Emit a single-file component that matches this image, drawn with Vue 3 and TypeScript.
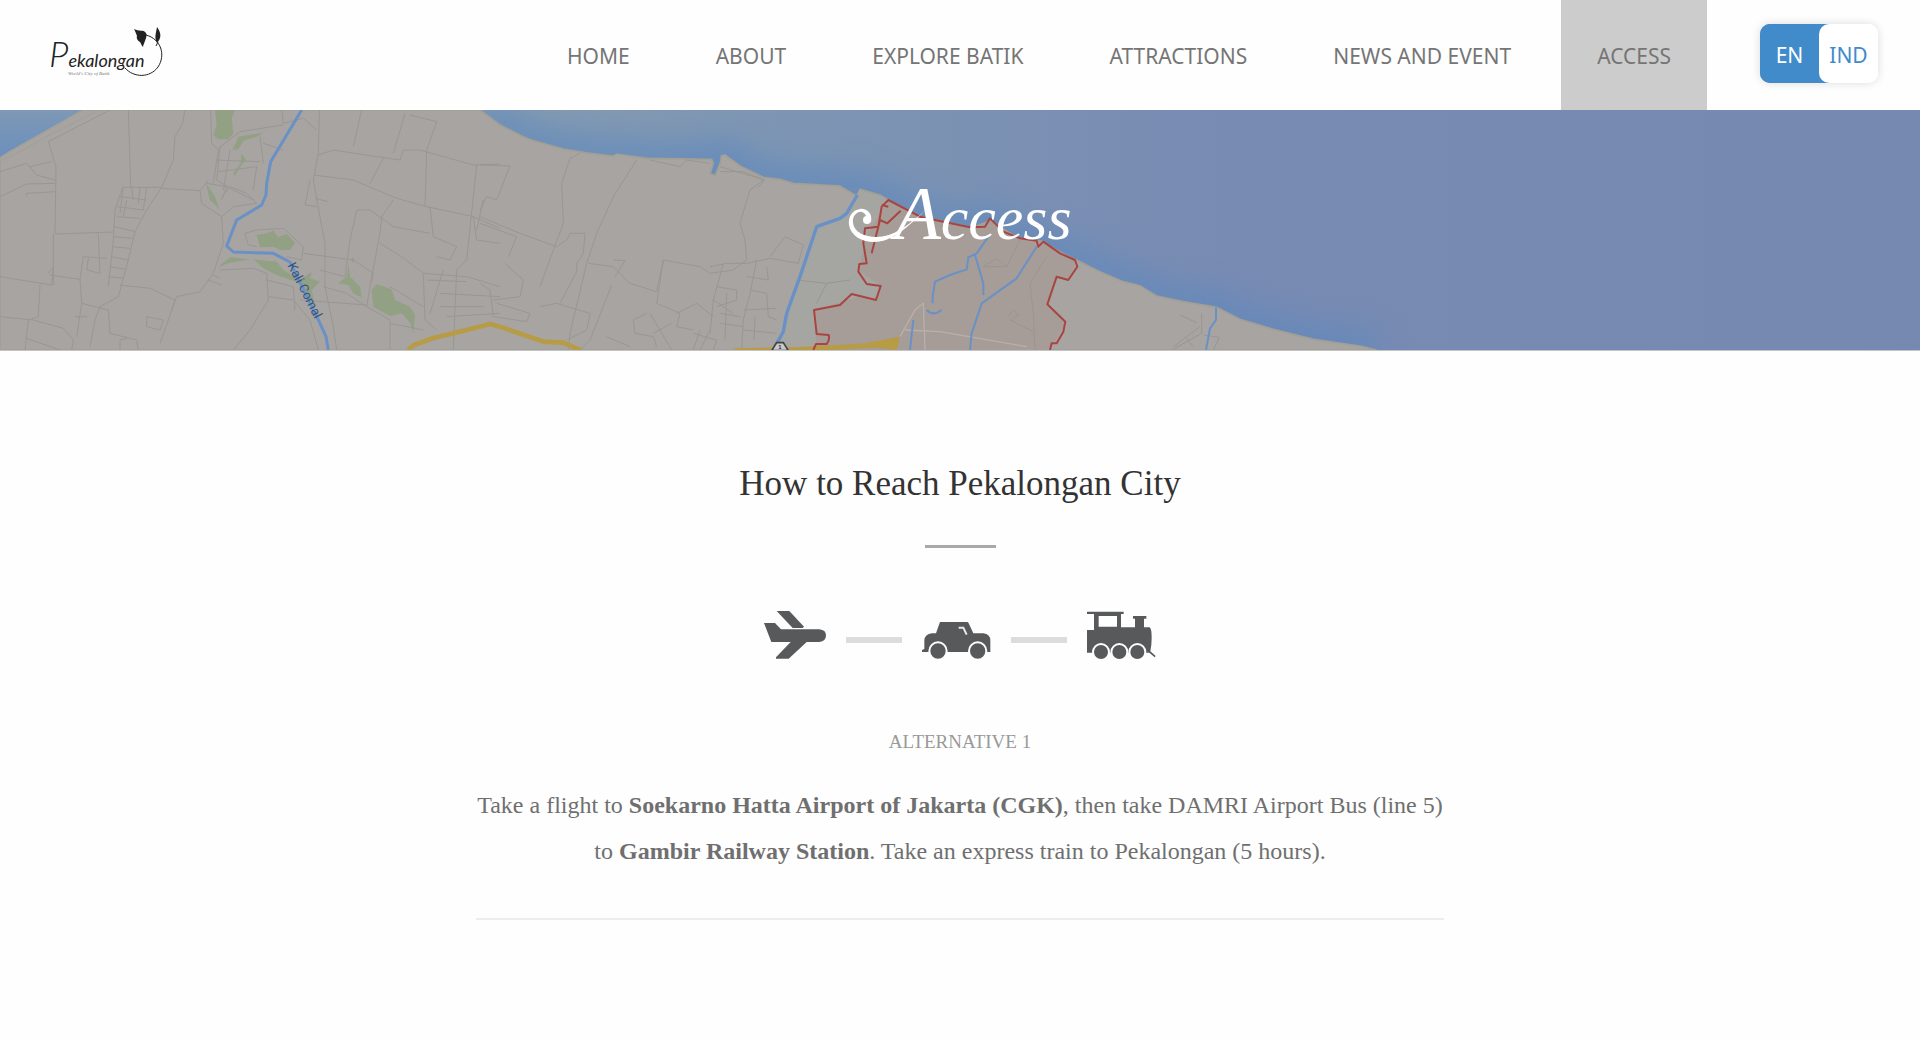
<script setup lang="ts">
import { ref } from 'vue'

interface NavItem {
  label: string
  href: string
}

const navItems: NavItem[] = [
  { label: 'HOME', href: '#home' },
  { label: 'ABOUT', href: '#about' },
  { label: 'EXPLORE BATIK', href: '#explore-batik' },
  { label: 'ATTRACTIONS', href: '#attractions' },
  { label: 'NEWS AND EVENT', href: '#news-and-event' },
  { label: 'ACCESS', href: '#access' },
]

const current = ref('ACCESS')
const language = ref<'EN' | 'IND'>('EN')

const coast =
  'M1440 0 L1500 45 L1570 80 L1600 92 L1690 117 L1770 130 L1840 138 L1850 132 L1940 145 L2135 148 L2140 160 L2130 192 L2146 196 L2162 155 L2164 138 L2175 135 L2220 168 L2290 202 L2340 208 L2380 220 L2520 228 L2570 258 L2580 238 L2640 255 L2665 270 L2760 320 L2830 335 L2910 352 L2950 350 L2970 330 L3010 365 L3060 385 L3130 395 L3180 430 L3230 450 L3300 485 L3370 515 L3420 527 L3470 558 L3550 575 L3650 592 L3720 628 L3820 658 L3940 688 L4080 708 L4130 720'
</script>

<template>
  <div class="page">
    <header class="topbar">
      <a class="logo" href="#home" aria-label="Pekalongan, World's City of Batik">
        <svg viewBox="0 0 130 70" width="130" height="70" aria-hidden="true">
          <text class="logo-name" x="1" y="47"><tspan class="logo-initial">P</tspan>ekalongan</text>
          <text class="logo-tag" x="20" y="55">World's City of Batik</text>
          <path
            d="M77 48 C86 58 102 58 110 47 C118 35 113 19 98 15"
            fill="none"
            stroke="#222"
            stroke-width="1"
          />
          <path
            d="M86 9 C91 12 95 9 98 13 C100 16 96 22 95 27 C93 25 93 23 92 22 C90 21 88 18 89 16 C88 13 87 11 86 9Z M109 7 C113 12 114 18 109 23 C106 18 108 13 109 7Z"
            fill="#222"
          />
          <path d="M110 22 L108 26" stroke="#222" />
        </svg>
      </a>

      <nav class="nav" aria-label="Main">
        <a
          v-for="item in navItems"
          :key="item.label"
          :href="item.href"
          :class="['nav-link', { active: current === item.label }]"
          @click="current = item.label"
          >{{ item.label }}</a
        >
      </nav>

      <div class="lang" role="group" aria-label="Language">
        <button
          type="button"
          :class="['lang-btn', { chosen: language === 'EN' }]"
          @click="language = 'EN'"
        >
          EN
        </button>
        <button
          type="button"
          :class="['lang-btn', { chosen: language === 'IND' }]"
          @click="language = 'IND'"
        >
          IND
        </button>
      </div>
    </header>

    <section class="hero">
      <svg class="map" viewBox="0 0 5760 720" preserveAspectRatio="xMidYMid slice" aria-hidden="true">
        <defs>
          <linearGradient id="sea" x1="0" x2="1" y1="0" y2="0">
            <stop offset="0.25" stop-color="#849bb2" />
            <stop offset="0.42" stop-color="#7d95b3" />
            <stop offset="0.64" stop-color="#788bb3" />
            <stop offset="1" stop-color="#768ab1" />
          </linearGradient>
          <linearGradient id="bay" x1="0" x2="0" y1="0" y2="1">
            <stop offset="0" stop-color="#7e98b6" />
            <stop offset="1" stop-color="#6c8fbb" />
          </linearGradient>
          <filter id="shallow" x="-10%" y="-40%" width="120%" height="180%">
            <feGaussianBlur stdDeviation="44" />
          </filter>
        </defs>

        <rect width="5760" height="720" fill="url(#sea)" />
        <path :d="coast" fill="none" stroke="#5f88bd" stroke-width="90" opacity="0.75" filter="url(#shallow)" />
        <path :d="`${coast} L0 720 L0 0 Z`" fill="#a7a4a2" stroke="#a19f96" stroke-width="5" />
        <path d="M0 0 H245 L140 60 L70 100 L30 122 L0 142Z" fill="url(#bay)" />
        <path d="M0 144 L32 124 L142 62 L250 0" class="sand" />
        <path d="M0 154 L40 136 L150 74 L290 4" class="sand" />

        <!-- district inside the city boundary -->
        <path
          d="M2665 270 L2760 320 L2830 335 L2910 352 L2970 330 L3060 385 L3130 395 L3230 450 L3205 508 L3170 505 L3140 585 L3195 640 L3150 720 H2450 L2440 600 L2600 555 L2630 570 L2640 526 L2575 480 L2600 380Z"
          fill="#a69c98"
        />
        <path d="M2580 240 L2650 262 L2590 370 L2575 480 L2640 526 L2620 570 L2540 555 L2440 600 L2450 700 H2340 L2440 360 L2560 280Z" fill="#a5a5a1" />

        <!-- parks -->
        <g fill="#92a084" transform="translate(0 -30)">
          <path d="M645 30 H705 L695 55 L700 100 L685 118 L655 118 L640 105 L650 75Z" />
          <path d="M698 150 L715 110 L790 98 L770 110 L730 122 L715 148Z" />
          <path d="M725 160 L738 180 L720 200 L705 228 L700 220 L722 190Z" />
          <path d="M618 250 L645 290 L658 328 L630 300Z" />
          <path d="M770 405 L800 400 L820 392 L835 412 L860 402 L885 428 L870 450 L840 450 L820 440 L780 442Z" />
          <path d="M655 500 L690 472 L750 478 L690 488Z M760 478 L830 485 L850 510 L900 540 L935 515 L930 535 L960 545 L935 570 L945 620 L920 580 L900 550 L830 525 L790 505Z" />
          <path d="M1015 550 L1040 530 L1045 490 L1050 530 L1080 560 L1085 592 L1060 580 L1045 555Z M1052 478 L1062 472 L1060 490Z" />
          <path d="M1115 570 L1130 552 L1175 568 L1185 600 L1230 620 L1245 645 L1240 700 L1232 670 L1205 640 L1170 648 L1120 620Z" />
        </g>

        <!-- minor roads, west -->
        <g class="road" transform="translate(0 -30)">
          <path d="M385 30 L392 262 M555 30 L548 70 L525 110 L520 180 L485 262 L440 330 L405 395 L385 480 L355 590 L300 620 L285 660 L270 740" />
          <path d="M330 30 L145 125 L168 200 L165 402 L340 396 M0 215 L80 190 L110 225 L165 240 M0 290 L80 252 L165 250 M80 290 V280 L165 275 M90 200 L155 185" />
          <path d="M485 262 H368 L345 330 L340 420 L325 560 M485 265 L600 272 M600 272 L605 310 L665 350 L670 430 L640 520 L600 575 L530 590 L480 730 M600 272 L625 242" />
          <path d="M395 262 L400 300 M420 262 L415 310 M440 262 L430 330 M360 290 L440 300 M352 320 L430 330 M350 350 L420 355 M342 380 L405 395 M340 410 L398 415 M335 440 L390 445 M335 470 L385 480 M330 500 L378 508 M325 530 L370 535 M370 262 L360 340 M380 300 L370 350" />
          <path d="M0 530 L155 555 L160 500 L145 520 M160 402 V555 M120 555 L115 650 L85 660 L75 750 M0 650 L100 660 L190 685 L220 720 L215 750 M150 525 L240 538 L250 470 L320 475 M295 402 L300 520 L260 510 L265 475 M240 538 L245 610 L325 630 L330 700 M80 715 L180 750 M245 610 L230 710 M260 650 L225 650 M360 555 L450 565 L525 600 L515 630 M440 650 L490 660 L480 690 L440 680Z M330 700 L410 720 L415 750 M360 750 V720 L380 715" />
          <path d="M632 30 L635 130 L655 150 L640 250 M655 145 L720 95 L850 75 M660 140 L650 240 L700 270 L760 300 M650 180 L780 185 M655 215 L770 200 L760 270 M690 150 L670 270 M780 110 L790 190 M665 290 L690 260 L740 280 L770 310 L700 320 L665 350 M620 250 L680 260 L665 300 M790 130 L850 150" />
          <path d="M845 30 L850 70 L910 55 L950 90 M958 30 L955 160 L940 240 L960 350 L975 430 L975 560 L1000 680 L1010 750 M955 165 L1000 150 L1130 170 L1200 180 L1210 150 L1260 150 L1420 195 L1500 192 M1085 30 L1060 140 M1215 40 L1180 160 M1230 45 L1310 65 L1280 150 L1275 320 M940 225 L1060 240 L1190 295 L1280 320 L1420 350 L1500 385 M1150 175 L1110 250 M1430 195 L1400 480 L1370 510 L1360 750" />
          <path d="M930 240 L915 315 L950 320 M945 295 L985 305 M1180 300 L1145 350 L1140 400 L1115 530 L1100 620 M1070 330 L1110 330 L1180 380 L1290 400 M1070 330 L1050 420 L1035 530 L960 510 M1140 430 L1205 470 L1270 520 L1400 530 L1500 560 M1290 320 L1300 410 L1370 440 L1350 480 L1310 470 M1270 520 L1275 660 L1310 690 M1330 510 L1290 640 M1280 540 L1400 545 M1320 580 L1500 590 M1320 620 H1450 M1340 650 L1500 640 M1420 350 L1430 420 L1500 430 M1450 300 L1430 390 M910 460 L1060 480 L1120 520 L1115 545 M900 600 L1100 615 M1170 560 L1270 620" />
          <path d="M735 400 L770 390 L850 385 L910 440 L905 480 L860 470 M735 400 L745 435 L770 440 M660 510 L760 505 L800 520 L805 600 L750 690 L700 750 M805 590 L880 600 L930 660 L955 750 M625 540 L665 555 M640 525 L660 535 M800 540 L880 560 L885 630 M970 560 L1040 580 L1100 620 L1170 660 V750 M1170 670 L1270 690" />
        </g>

        <!-- minor roads, centre -->
        <g class="road" transform="translate(1440 -30)">
          <path d="M300 160 L270 175 L245 250 L250 370 L220 450 L180 560 M470 180 L400 290 L350 400 L320 490 L270 700 L265 750 M0 195 L90 198 L50 300 L20 290 L0 330 M0 350 L120 400 L230 440 L260 420 L270 400 H315 L310 460 L290 490 L290 515 L240 610 M0 370 L110 410 L85 470 M75 490 L130 540 L120 590 L40 600 M0 550 L30 570 L40 650 L140 665 L150 640 L50 610" />
          <path d="M325 490 L400 500 L450 550 L530 575 L550 480 L660 500 L690 520 L760 510 L800 480 L795 420 L780 370 L810 270 L850 240 L790 215 L720 215 M400 480 L435 482 L405 530 M690 500 L740 490 L800 490 L870 475 L955 490 M870 470 L915 410 L970 435 L955 490 M550 480 L530 610 L600 640 L590 680 L640 690 M730 490 L700 600 L690 700 M180 620 L230 610 L330 640 L320 690 L260 720 M395 555 L330 720 L300 750" />
          <path d="M710 560 L770 570 V600 L710 620 M830 480 L810 580 L790 660 L785 750 M810 570 L860 580 L865 650 L890 660 M720 640 L780 650 M720 670 L790 680 M790 630 L890 625 M790 690 L890 700 M640 700 L710 720 L700 750 M660 690 L640 750 M690 690 L660 750 M500 640 L460 660 L465 700 L520 710 L530 740 M510 640 L575 750 M520 700 L575 670 M380 710 L450 740 M590 640 L650 610 L700 650 M950 540 L1040 550 L1110 540 M1040 550 L1010 610 M700 600 L760 640 M740 580 L735 720 M825 650 L822 720 M860 500 L865 540 L800 530" />
          <path d="M510 180 L600 200 L620 180 L690 190 M720 200 L855 240 L830 265" />
        </g>
        <g class="road" transform="translate(2400 150)">
          <path d="M660 240 L620 320 M740 290 L690 370 L700 460 L705 570 M625 470 L640 450 L655 465 L630 480 L700 515 M550 320 L590 295 L620 320Z M1120 560 L1200 500" />
        </g>
        <g class="road" transform="translate(3300 -30)">
          <path d="M240 645 L290 668 M305 640 V700 L215 750 M260 715 L280 740 M310 705 L358 712 L340 750" />
        </g>

        <!-- pale streets in the town centre -->
        <g fill="none" stroke="#b9b0ab" stroke-width="4" transform="translate(2400 150)">
          <path d="M300 530 L345 450 L370 430 L375 570 M315 510 L420 515 L680 560" />
        </g>

        <!-- waterways -->
        <g fill="none" stroke="#6a91c6" stroke-linejoin="round">
          <path d="M905 0 L812 155 L800 220 L798 255 L785 285 L710 330 L680 408 L700 426 L820 430 L870 456 L960 640 L978 680 L985 720" stroke-width="9" />
          <path d="M2572 255 L2540 310 L2520 325 L2450 350 L2400 500 L2360 610 L2350 665 L2325 710" stroke-width="10" />
          <path d="M2965 380 L2930 430 L2905 442 L2900 478 L2850 495 L2805 515 L2798 560 V580 M2925 435 L2950 520 L2950 555 M3110 410 L3050 505 L2945 580 L2915 670 L2910 720 M2780 600 Q2800 620 2825 600 M2740 630 L2730 720 M3648 592 L3648 630 L3630 655 L3618 720" stroke-width="6" />
        </g>

        <!-- main road -->
        <g fill="none" stroke="#b89b45" stroke-width="14" stroke-linejoin="round">
          <path d="M1225 720 L1240 706 L1300 684 L1400 660 L1470 642 L1500 650 L1630 695 L1690 698 L1745 722" />
          <path d="M2205 722 L2400 718 L2620 706 L2690 695" />
        </g>
        <path d="M2600 698 L2700 680 L2690 720 L2600 710Z" fill="#b89b45" />

        <!-- city boundary -->
        <path
          d="M2440 720 L2448 702 H2480 Q2490 690 2486 675 L2450 672 L2442 600 L2520 585 L2555 552 L2628 570 L2642 528 L2600 522 L2575 485 L2578 462 L2600 460 L2590 400 L2595 355 L2635 350 L2645 290 L2665 270 L2760 320 L2830 335 L2910 352 L2955 350 L2970 325 L2985 340 L3010 365 L3060 385 L3110 392 L3115 410 L3130 395 L3180 430 L3225 450 L3232 470 L3205 510 L3170 500 L3142 583 L3196 635 L3190 665 L3170 700 L3155 700 L3150 720 M2645 285 L2665 290 M2615 430 L2640 330 L2662 340 L2702 302"
          fill="none"
          stroke="#a94540"
          stroke-width="6"
          stroke-linejoin="round"
        />

        <path d="M2315 722 L2330 698 H2350 L2365 722Z" fill="#c9c9c9" stroke="#444" stroke-width="5" />
        <text class="route" x="2335" y="717">1</text>
        <text class="river" transform="translate(862 466) rotate(63)">Kali Comal</text>
      </svg>

      <h1 class="hero-title">
        <svg class="swash" viewBox="0 0 80 40" width="80" height="40" aria-hidden="true">
          <path
            d="M23 15 C25 6 18 1 12 2 C4 3 0 10 1 18 C3 29 14 35 26 35 C45 35 60 19 78 3 C60 18 46 30 28 30 C17 30 6 25 5 16 C4 8 10 4 14 5 C17 6 18 8 18 10Z"
            fill="#fff"
          />
          <circle cx="19" cy="13" r="4" fill="#fff" />
        </svg>
        <span class="hero-word"><span class="hero-initial">A</span>ccess</span>
      </h1>
    </section>

    <main class="content">
      <h2 class="title">How to Reach Pekalongan City</h2>
      <div class="title-rule"></div>

      <div class="route-icons" aria-hidden="true">
        <svg width="62" height="50" viewBox="0 0 186 150" fill="#58595b">
          <path d="M38 3 H76 L120 50 L116 54 H86Z" />
          <path d="M0 39 H33 L51 58 H166 Q186 60 186 76 Q186 94 166 96 H128 L74 146 H36 V142 L80 96 H22Z" />
        </svg>
        <span class="dash"></span>
        <svg width="69" height="50" viewBox="0 0 207 150" fill="#58595b">
          <path
            d="M54 36 H136 Q138 36 140 40 L154 70 H184 Q205 72 205 92 V126 H0 V120 L7 117 V92 Q8 72 30 70 H42Z"
          />
          <path d="M110 53 H124 L134 74" fill="none" stroke="#ececec" stroke-width="6" />
          <g stroke="#fefefe" stroke-width="6">
            <circle cx="48" cy="123" r="26" />
            <circle cx="167" cy="123" r="26" />
          </g>
        </svg>
        <span class="dash"></span>
        <svg width="69" height="50" viewBox="0 0 207 150" fill="#58595b">
          <path
            fill-rule="evenodd"
            d="M0 5 H110 V12 H102 V52 H144 V26 H138 V18 H178 V26 H171 V52 H188 Q194 56 194 84 Q194 106 190 124 L206 138 L203 142 L187 128 H0 V60 H21 V12 H0Z M35 18 V50 H90 V18Z"
          />
          <g stroke="#fefefe" stroke-width="6">
            <circle cx="42" cy="126" r="24" />
            <circle cx="97" cy="126" r="24" />
            <circle cx="151" cy="126" r="24" />
          </g>
        </svg>
      </div>

      <section class="alternative">
        <h3 class="alternative-label">ALTERNATIVE 1</h3>
        <p class="alternative-text">
          Take a flight to <strong>Soekarno Hatta Airport of Jakarta (CGK)</strong>, then take DAMRI Airport Bus (line 5)<br />
          to <strong>Gambir Railway Station</strong>. Take an express train to Pekalongan (5 hours).
        </p>
      </section>
    </main>
  </div>
</template>

<style>
body {
  margin: 0;
  background: #fefefe;
}
</style>

<style scoped>
.page {
  min-height: 100vh;
  background: #fefefe;
  font-family: 'Liberation Serif', 'Times New Roman', serif;
}

.topbar {
  display: flex;
  align-items: center;
  height: 110px;
  padding: 0 42px 0 48px;
  font-family: 'Noto Sans', 'Segoe UI', sans-serif;
}

.logo {
  display: block;
  height: 70px;
}

.logo-name {
  font: italic 400 18px 'Lato', sans-serif;
  fill: #222;
}

.logo-initial {
  font-size: 36px;
  font-weight: 300;
}

.logo-tag {
  font: italic 5px 'Liberation Serif', serif;
  fill: #777;
}

.nav {
  display: flex;
  align-self: stretch;
  gap: 14px;
  margin-left: auto;
}

.nav-link {
  display: flex;
  align-items: center;
  padding: 2px 36px 0;
  font-size: 21px;
  color: #757575;
  text-decoration: none;
  white-space: nowrap;
}

.nav-link.active {
  background: #cccccc;
}

.lang {
  display: flex;
  margin-left: 53px;
  margin-bottom: 3px;
  border-radius: 10px;
  background: linear-gradient(90deg, #428bca 75%, #fff 75%);
  box-shadow: 0 0 10px rgba(0, 0, 0, 0.14);
}

.lang-btn {
  width: 59px;
  height: 59px;
  padding: 2px 0 0;
  border: 0;
  border-radius: 10px;
  background: #fff;
  color: #428bca;
  font: 21px 'Noto Sans', 'Segoe UI', sans-serif;
}

.lang-btn.chosen {
  background: #428bca;
  color: #fff;
}

.hero {
  position: relative;
  display: flex;
  justify-content: center;
  height: 240px;
  border-bottom: 1px solid #c4c4c4;
}

.map {
  position: absolute;
  inset: 0;
  width: 100%;
  height: 100%;
}

.road {
  fill: none;
  stroke: #9a9692;
  stroke-width: 3;
}

.sand {
  fill: none;
  stroke: #a3a198;
  stroke-width: 4;
}

.route {
  font: bold 18px 'Liberation Sans', sans-serif;
  fill: #333;
}

.river {
  font: 38px 'Roboto', sans-serif;
  fill: #34547f;
}

.hero-title {
  position: relative;
  display: flex;
  align-items: flex-start;
  margin: 63px 0 0;
  color: #fff;
  font-weight: 400;
  font-style: italic;
}

.swash {
  margin: 34px -34px 0 0;
}

.hero-word {
  font-size: 62px;
  line-height: 80px;
}

.hero-initial {
  font-size: 76px;
}

.content {
  display: flex;
  flex-direction: column;
  align-items: center;
  padding: 111px 24px 80px;
}

.title {
  margin: 0;
  color: #333;
  font-size: 35px;
  font-weight: 400;
  line-height: 44px;
}

.title-rule {
  width: 71px;
  height: 3px;
  margin-top: 39px;
  background: #a8a8a8;
}

.route-icons {
  display: flex;
  align-items: center;
  gap: 20px;
  margin-top: 62px;
}

.dash {
  width: 56px;
  height: 6px;
  margin-top: 9px;
  background: #dcdcdc;
}

.alternative {
  display: flex;
  flex-direction: column;
  align-items: center;
  gap: 28px;
  width: 100%;
  max-width: 968px;
  margin-top: 70px;
  padding-bottom: 44px;
  border-bottom: 2px solid #ededed;
  text-align: center;
}

.alternative-label {
  margin: 0;
  color: #999;
  font-size: 19px;
  font-weight: 400;
  line-height: 24px;
}

.alternative-text {
  margin: 0;
  color: #6f6f6f;
  font-size: 24px;
  line-height: 46px;
}
</style>
